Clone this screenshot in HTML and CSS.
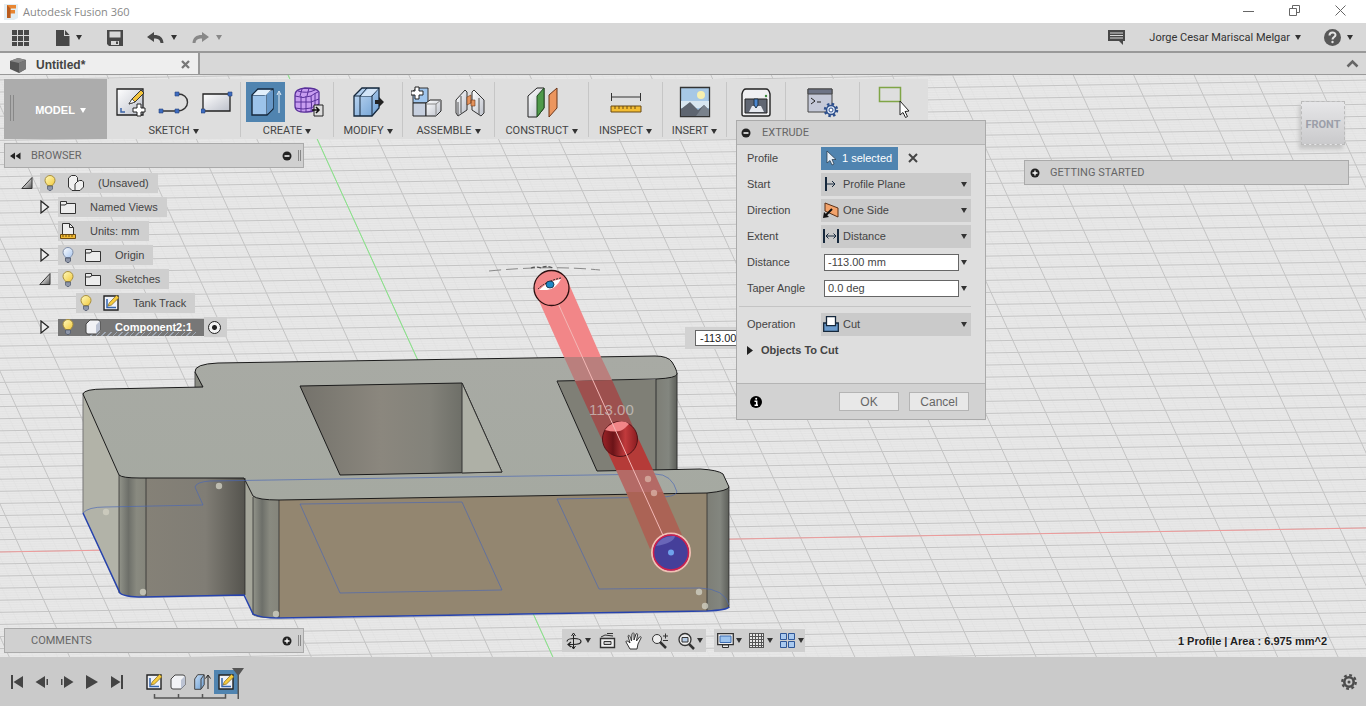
FILE: index.html
```
<!DOCTYPE html>
<html lang="en">
  <head>
    <meta charset="UTF-8" />
    <meta name="viewport" content="width=device-width, initial-scale=1.0" />
    <title>Autodesk Fusion 360</title>
    <link rel="stylesheet" href="styles.css">
  </head>
  <body>
    <!-- shared icons -->
    <svg class="defs" width="0" height="0" aria-hidden="true">
      <defs>
        <linearGradient id="gBulb" x1="0" y1="0" x2="1" y2="1"><stop offset="0" stop-color="#fffbc0"/><stop offset="1" stop-color="#f2c93c"/></linearGradient>
        <linearGradient id="gOff" x1="0" y1="0" x2="1" y2="1"><stop offset="0" stop-color="#fff"/><stop offset="1" stop-color="#a9c6ee"/></linearGradient>
        <linearGradient id="gBlue" x1="0" y1="0" x2="1" y2="1"><stop offset="0" stop-color="#c5dcf5"/><stop offset="1" stop-color="#6d9fd3"/></linearGradient>
        <linearGradient id="gWhite" x1="0" y1="0" x2="1" y2="1"><stop offset="0" stop-color="#fff"/><stop offset="1" stop-color="#bcc0ca"/></linearGradient>
        <linearGradient id="gTri" x1="0" y1="0" x2="1" y2="1"><stop offset="0.3" stop-color="#eee"/><stop offset="1" stop-color="#555"/></linearGradient>
      </defs>
      <symbol id="bulb" viewBox="0 0 16 16"><path d="M5.500 10.500C5 9 3 8 3 5.300a5 4.800 0 0 1 10 0C13 8 11 9 10.500 10.500z" fill="url(#gBulb)" stroke="#a98f3c"/><path d="M5.500 11h5v3l-1.500 1.500h-2L5.500 14z" fill="#8e96a8" stroke="#4c566b" stroke-width=".7"/></symbol>
      <symbol id="bulb-off" viewBox="0 0 16 16"><path d="M5.500 10.500C5 9 3 8 3 5.300a5 4.800 0 0 1 10 0C13 8 11 9 10.500 10.500z" fill="url(#gOff)" stroke="#7f8ea8"/><path d="M5.500 11h5v3l-1.500 1.500h-2L5.500 14z" fill="#8e96a8" stroke="#3c465b" stroke-width=".7"/></symbol>
      <symbol id="folder" viewBox="0 0 16 16"><path d="M.5 14.500v-12h6v2h9v10zM.5 6h4.500l2-1.500" fill="#ececec" stroke="#333"/></symbol>
      <symbol id="sketch" viewBox="0 0 16 16"><path d="M1 1h14v14H1z" fill="#eef1f8" stroke="#222" stroke-width="1.400"/><path d="M4 4v8.500h9" fill="none" stroke="#3566ad" stroke-width="1.500"/><path d="M5 11l1.200-3L13.500.3 16 2.700 8.500 10z" fill="#f7cb3d" stroke="#7a6320" stroke-width=".7"/></symbol>
      <symbol id="body" viewBox="0 0 16 16"><path d="M1 5l4-4h8q2 0 2 2v8l-4 4H3q-2 0-2-2z" fill="#f1f2f5" stroke="#444"/><path d="M11 15V6l4-4v9z" fill="#bcc3d3"/></symbol>
      <symbol id="closed" viewBox="0 0 12 14"><path d="M2 1l7.500 6L2 13z" fill="#eee" stroke="#222" stroke-width="1.200"/></symbol>
      <symbol id="open" viewBox="0 0 12 14"><path d="M11 1.500v11H.8z" fill="url(#gTri)" stroke="#333"/></symbol>
      <symbol id="minus" viewBox="0 0 10 10"><circle cx="5" cy="5" r="4.500" fill="#222"/><path d="M2.500 5h5" stroke="#fff" stroke-width="1.500"/></symbol>
      <symbol id="plus" viewBox="0 0 10 10"><circle cx="5" cy="5" r="4.500" fill="#222"/><path d="M2.500 5h5M5 2.500v5" stroke="#fff" stroke-width="1.300"/></symbol>
    </svg>

    <header class="titlebar">
      <svg width="16" height="16" viewBox="0 0 16 16"><path d="M1 0h14v14l-4 2H1z" fill="#e3eef3"/><path d="M4 1h9v3.500H7.500V6H12v3.500H7.500V14H4z" fill="#e88632"/><path d="M4 1l3.500 3.500V14H4z" fill="#b95c1e"/></svg>
      <h1>Autodesk Fusion 360</h1>
      <div class="window-buttons">
        <button aria-label="Minimize"><svg width="11" height="11"><path d="M0 6.500h11" stroke="#666"/></svg></button>
        <button aria-label="Restore"><svg width="11" height="11" fill="none" stroke="#666"><path d="M.5 3.500h7v7h-7zM3.500 3V.5h7v7H8"/></svg></button>
        <button aria-label="Close"><svg width="11" height="11"><path d="M.5.5l10 10M10.500.5l-10 10" stroke="#666"/></svg></button>
      </div>
    </header>

    <nav class="quickbar">
      <button class="grid-btn" aria-label="Data panel"><svg width="18" height="18" fill="#484848"><path d="M0 1h5v5H0zM6 1h5v5H6zM12 1h5v5h-5zM0 7h5v5H0zM6 7h5v5H6zM12 7h5v5h-5zM0 13h5v4H0zM6 13h5v4H6zM12 13h5v4h-5z"/></svg></button>
      <button class="file-btn" aria-label="File"><svg width="14" height="16" fill="#484848"><path d="M0 0h8v6h5.500v10H0zM9 0l4.500 5H9z"/></svg><i class="caret"></i></button>
      <button class="save-btn" aria-label="Save"><svg width="16" height="16"><path d="M0 0h16v16H2l-2-2z" fill="#484848"/><path d="M2.500 1.500h11v6h-11z" fill="#d8d8d8"/><path d="M4 11h8v4H4z" fill="#d8d8d8"/><path d="M9 11.500h2V14H9z" fill="#484848"/></svg></button>
      <button class="undo-btn" aria-label="Undo"><svg width="18" height="14"><path d="M0 6l7-5v3c6 0 9 2.500 9.500 8h-3C13 8.500 11 7.500 7 7.500V11z" fill="#484848"/></svg><i class="caret"></i></button>
      <button class="redo-btn" aria-label="Redo" disabled><svg width="18" height="14"><path d="M17 6l-7-5v3C4 4 1 6.500.5 12h3C4 8.500 6 7.500 10 7.500V11z" fill="#888"/></svg><i class="caret dim"></i></button>
      <div class="account">
        <button class="chat-btn" aria-label="Notifications"><svg width="17" height="15"><path d="M0 0h17v11h-2v4l-4-4H0z" fill="#484848"/><path d="M2 3h13M2 5.500h13M2 8h13" stroke="#d8d8d8"/></svg></button>
        <button class="user-btn">Jorge Cesar Mariscal Melgar<i class="caret"></i></button>
        <button class="help-btn" aria-label="Help"><svg width="17" height="17"><circle cx="8.500" cy="8.500" r="8.500" fill="#585858"/><path d="M5.500 6.500c0-4 6-4 6-.5 0 2-3 2-3 4.500" stroke="#e4e4e4" stroke-width="2" fill="none"/><circle cx="8.500" cy="13" r="1.200" fill="#e4e4e4"/></svg><i class="caret"></i></button>
      </div>
    </nav>

    <div class="tabs">
      <div class="tab">
        <svg width="17" height="16"><path d="M0 4l8-3 8 2v9l-7 4-9-4z" fill="#555"/><path d="M0 4l8-3 8 2-7 3z" fill="#8a8a8a"/><path d="M9 6l7-3v9l-7 4z" fill="#777"/></svg>
        <span>Untitled*</span>
        <button aria-label="Close tab"><svg width="9" height="9"><path d="M1 1l7 7M8 1L1 8" stroke="#777" stroke-width="2.300"/></svg></button>
      </div>
      <button class="collapse" aria-label="Collapse"><svg width="13" height="9"><path d="M1.500 7.500l5-5 5 5" fill="none" stroke="#666" stroke-width="2.500"/></svg></button>
    </div>

    <main class="viewport">
      <svg class="scene" aria-hidden="true">
        <defs>
          <linearGradient id="gTop" x1="0" y1="0" x2="0" y2="1"><stop offset="0" stop-color="#a8aaa4"/><stop offset="1" stop-color="#a5a9a1"/></linearGradient>
          <linearGradient id="gHole" gradientUnits="userSpaceOnUse" x1="300" x2="462" y1="0" y2="0"><stop offset="0" stop-color="#74726b"/><stop offset=".5" stop-color="#8b877e"/><stop offset=".8" stop-color="#83827a"/><stop offset="1" stop-color="#6e6f68"/></linearGradient>
          <linearGradient id="gWall" x1="0" x2="1"><stop offset="0" stop-color="#858177"/><stop offset=".6" stop-color="#807d75"/><stop offset="1" stop-color="#55544e"/></linearGradient>
          <linearGradient id="gCyl" x1="0" x2="1"><stop offset="0" stop-color="#92948a"/><stop offset=".35" stop-color="#6d6f69"/><stop offset=".65" stop-color="#898a80"/><stop offset="1" stop-color="#85857b"/></linearGradient>
          <linearGradient id="gCylR" x1="0" x2="1"><stop offset="0" stop-color="#7d7e76"/><stop offset=".6" stop-color="#83867f"/><stop offset="1" stop-color="#5c5e59"/></linearGradient>
          <linearGradient id="gBall" x1="0" x2="1"><stop offset="0" stop-color="#9b2327"/><stop offset=".3" stop-color="#6b1418"/><stop offset=".65" stop-color="#c13a3c"/><stop offset="1" stop-color="#8a1c20"/></linearGradient>
        </defs>
        <path id="gridMinor" class="grid-minor"/>
        <path id="gridMajor" class="grid-major"/>
        <g transform="translate(0 -75)">
          <path id="axisX" stroke="#ee9a9a" fill="none"/>
          <path id="axisY" stroke="#86e886" fill="none"/>

          <!-- side walls -->
          <path d="M195 372l8 15-8 1z" fill="#888a81" stroke="#555"/>
          <path d="M83 393l36 82v118l-36-80z" fill="#b2b3a8"/>
          <path d="M83 393v120" stroke="#777" fill="none"/>
          <path d="M119 475h27v122q-22 0-27-4z" fill="url(#gCyl)"/>
          <path d="M146 478h99v117l-99 2z" fill="url(#gWall)"/>
          <path d="M245 478l8 18v119l-8-20z" fill="#a5a69a"/>
          <path d="M253 496l26 4v118q-22 1-26-3z" fill="url(#gCyl)"/>
          <path d="M279 499l428-7v119l-428 7z" fill="#938670"/>
          <path d="M707 492l22-6v121q-3 3-22 4z" fill="url(#gCylR)"/>
          <path d="M557 380h99v92h-60z" fill="#7f7f76"/>
          <path d="M656 379l21-6v98h-21z" fill="url(#gCylR)"/>
          <path d="M656 379v92M677 373v98" stroke="#333" fill="none"/>

          <!-- top face -->
          <path d="M195 372Q194 364 218 363L655 356Q668 356 672 362Q677 370 677 374Q677 378 656 379L557 381L597 471L700 469Q718 470 723 474L729 487Q728 491 707 493L279 500Q258 500 253 496L244 478L140 478Q122 478 119 475L83 394Q84 389 105 389L203 387z" fill="url(#gTop)" stroke="#1b1b1b"/>
          <path d="M300 386l162-3 40 89-162 3z" fill="url(#gHole)" stroke="#1b1b1b"/>
          <path d="M462 383l40 89-40 1z" fill="#aeb0a6" stroke="#333"/>
          <path d="M146 478v118M245 478v117M279 500v118M707 493v118M119 475v118M253 497v118M729 487v121" stroke="#222" fill="none" opacity=".7"/>

          <!-- sketch lines -->
          <path d="M83 513Q88 507 105 507L203 505L195 487Q196 482 210 481L655 474Q672 474 677 492Q675 497 660 497L557 499L599 589L700 588Q725 589 729 605M300 504l162-2 40 88-162 3z" fill="none" stroke="#4a67b5" opacity=".65"/>
          <path d="M83 513L120 593Q124 597 143 597L244 595L253 614Q260 618 278 618L707 611Q727 610 729 607" fill="none" stroke="#2743ad" stroke-width="1.500"/>
          <g fill="#d0cfc2" opacity=".8"><circle cx="106" cy="512" r="3.200"/><circle cx="219" cy="486" r="3.200"/><circle cx="143" cy="592" r="3.200"/><circle cx="276" cy="614" r="3.200"/><circle cx="699" cy="592" r="3.200"/><circle cx="705" cy="606" r="3.200"/></g>

          <!-- cut preview -->
          <path d="M535 292l34-8 32 73h-37z" fill="#f28688"/>
          <path d="M564 357h37l11 23-37 1z" fill="#ba7f7d"/>
          <path d="M575 381l37-1 27 60h-37z" fill="#9d504e"/>
          <path d="M602 440h37l14 30h-37z" fill="#b53b38"/>
          <path d="M616 470h37l10 22h-37z" fill="#b46a66"/>
          <path d="M626 492h37l19 43-32 14z" fill="#ab6355"/>
          <g fill="#d8b0a4" opacity=".8"><circle cx="648" cy="479" r="3.200"/><circle cx="654" cy="493" r="3.200"/></g>
          <circle cx="620" cy="439" r="17.500" fill="url(#gBall)" stroke="#521317"/>
          <path d="M605 430q4-6 12-8t12 2l-4 4q-6 6-20 2z" fill="#f28688"/>
          <path d="M552 290l119 263" stroke="#f2b8b6" fill="none"/>
          <circle cx="551.500" cy="288" r="17.500" fill="#f28688" stroke="#2c1010" stroke-width="1.300"/>
          <path d="M539 290q9-9 22-11-5 10-14 11z" fill="#fff"/>
          <path d="M538 289q8-8 23-11" stroke="#222" stroke-dasharray="2 1" fill="none"/>
          <ellipse cx="550" cy="284.500" rx="4" ry="3.500" fill="#1d87c4" stroke="#123" stroke-width=".8"/>
          <circle cx="671" cy="552.500" r="19" fill="#453f9a" stroke="#f0c0b4" stroke-width="2"/>
          <circle cx="671" cy="552.500" r="17.500" fill="none" stroke="#cf1f4c" stroke-width="1.500"/>
          <path d="M656 546q5-11 19-10-1 7-19 10z" fill="#6966b8"/>
          <circle cx="671" cy="552.500" r="3" fill="#6fa2ec"/>
          <path d="M489 271q60-6 111-1" stroke="#888" stroke-dasharray="12 5" fill="none"/>
          <path d="M531 268q5-2 10 0q5-3 12 0" stroke="#555" stroke-dasharray="4 2" fill="none" stroke-width="1.300"/>
          <text x="589" y="415" class="dim-text">113.00</text>
        </g>
      </svg>

      <div class="ribbon">
        <button class="workspace">MODEL<i class="caret"></i></button>
        <section class="group sketch-group">
          <div class="tools">
            <button aria-label="Create Sketch"><svg width="32" height="32"><path d="M2 3h26v26H2z" fill="url(#gWhite)" stroke="#222" stroke-width="1.300"/><path d="M6 22v4h4" stroke="#3b64a8" stroke-width="1.500" fill="none"/><path d="M14 18l3-5L26 4l3 3-9 9z" fill="#f2c43d" stroke="#333"/><path d="M14 18l3-5 3 3z" fill="#fff" stroke="#333" stroke-width=".7"/><path d="M22 18h4v4h4v4h-4v4h-4v-4h-4v-4h4z" fill="#fff" stroke="#222"/></svg></button>
            <button aria-label="Line"><svg width="32" height="32"><path d="M3 25h16c14 0 14-18 0-17" fill="none" stroke="#333" stroke-width="1.400"/><g fill="#3d6cc0" stroke="#28437a" stroke-width=".6"><path d="M1 23h4v4H1zM17 23h4v4h-4zM17 6h4v4h-4z"/></g></svg></button>
            <button aria-label="Rectangle"><svg width="32" height="32"><path d="M2 8h27v17H2z" fill="url(#gWhite)" stroke="#222" stroke-width="1.300"/><path d="M27 6h4v4h-4zM0 23h4v4H0z" fill="#3d6cc0" stroke="#28437a" stroke-width=".6"/></svg></button>
          </div>
          <button class="label">SKETCH<i class="caret"></i></button>
        </section>
        <section class="group create-group">
          <div class="tools">
            <button class="active" aria-label="Extrude"><svg width="32" height="32"><path d="M2 9l6-6h15v20l-6 6H2z" fill="#9cc3ea" stroke="#16283c" stroke-width="1.400"/><path d="M2 9h12q3 0 3-2l6-4M17 9v20" fill="none" stroke="#16283c"/><path d="M3 9l5-5h13l-5 5z" fill="#e2effb"/><path d="M17 8l6-4v18l-6 6z" fill="#6797c7"/><path d="M29 27V7m-2 2l2-4 2 4" stroke="#e8f1fa" fill="none"/></svg></button>
            <button aria-label="Create Form"><svg width="32" height="32"><path d="M2 9q0-6 10-7 12 0 14 4v12q-2 8-12 8Q2 27 2 20z" fill="#c79df0" stroke="#59309a" stroke-width="1.300"/><path d="M2 10q8 3 16 0M2 16h16M2 22q8 2 16 0M8 10v16M13 10v16M18 10q1 10 0 16M18 10q4-3 7-4M18 16l8-3M18 22l8-4M22 7v16M5 5q9 3 17-1M9 3L7 10M16 2l-2 8" fill="none" stroke="#59309a"/><path d="M21 19h9v11h-9z" fill="#ddd" stroke="#222"/><path d="M19 24h7m-3-3l3 3-3 3" stroke="#111" stroke-width="1.500" fill="none"/></svg></button>
          </div>
          <button class="label">CREATE<i class="caret"></i></button>
        </section>
        <section class="group modify-group">
          <div class="tools">
            <button aria-label="Press Pull"><svg width="32" height="32"><path d="M2 10l8-8h17v20l-7 8H2z" fill="url(#gBlue)" stroke="#16283c" stroke-width="1.300"/><path d="M2 10h6v20M8 10l7-8M8 10h12v20M20 10l7-8" fill="none" stroke="#16283c"/><path d="M9 10l7-7h10l-7 7z" fill="#d2e4f7"/><path d="M23 14h4v-3l5 5-5 5v-3h-4z" fill="#222"/></svg></button>
          </div>
          <button class="label">MODIFY<i class="caret"></i></button>
        </section>
        <section class="group assemble-group">
          <div class="tools">
            <button aria-label="New Component"><svg width="32" height="32"><path d="M2 17V5l4-3h11v15z" fill="#9fc5ed" stroke="#333"/><path d="M2 17h13v13H2z" fill="#c7d0df" stroke="#222"/><path d="M15 17l4-3h11v11l-5 5H15z" fill="url(#gWhite)" stroke="#222"/><path d="M15 18h10v12M25 18l5-4" fill="none" stroke="#888"/><path d="M4 1h4v4h4v4H8v4H4V9H0V5h4z" fill="#fff" stroke="#222"/></svg></button>
            <button aria-label="Joint"><svg width="32" height="32"><path d="M2 14L11 4l2 2v18L4 30l-2-3z" fill="url(#gWhite)" stroke="#333"/><path d="M7 10v17M4 16v14" stroke="#555" fill="none"/><path d="M30 14L20 4l-2 2v18l9 6 3-3z" fill="url(#gWhite)" stroke="#333"/><path d="M25 12v17" stroke="#555" fill="none"/><path d="M13 11l4-2v8l-4 2zM17 14h4v6h-4z" fill="#e4925b" stroke="#66371b" stroke-width=".6"/></svg></button>
          </div>
          <button class="label">ASSEMBLE<i class="caret"></i></button>
        </section>
        <section class="group construct-group">
          <div class="tools">
            <button aria-label="Offset Plane"><svg width="34" height="32"><path d="M3 10l9-8h7v20l-7 9H3z" fill="url(#gWhite)" stroke="#222"/><path d="M12 10l7-8v20l-7 9z" fill="#4f9a4a" stroke="#234c22"/><path d="M24 9l8-7v20l-8 9z" fill="#ec965e" stroke="#6b3417"/></svg></button>
          </div>
          <button class="label">CONSTRUCT<i class="caret"></i></button>
        </section>
        <section class="group inspect-group">
          <div class="tools">
            <button aria-label="Measure"><svg width="32" height="32"><path d="M2 11h28M1.500 7v8M30.500 7v8" stroke="#333" fill="none"/><path d="M1 20h30v6H1z" fill="#f3bd33" stroke="#6b4a12"/><path d="M5 20v3M9 20v3M13 20v3M17 20v3M21 20v3M25 20v3" stroke="#6b4a12"/></svg></button>
          </div>
          <button class="label">INSPECT<i class="caret"></i></button>
        </section>
        <section class="group insert-group">
          <div class="tools">
            <button aria-label="Insert image"><svg width="32" height="32"><path d="M1.500 1.500h29v29h-29z" fill="#a7c8e6" stroke="#333" stroke-width="1.300"/><path d="M2 15h28v7H2z" fill="#d8e6f0"/><circle cx="22" cy="9" r="4" fill="#f7f0b0"/><path d="M2 23l9-7 8 8 6-5 5 5v6H2z" fill="#5e6570"/><path d="M17 30l8-11 5 5v6z" fill="#7a828c"/></svg></button>
          </div>
          <button class="label">INSERT<i class="caret"></i></button>
        </section>
        <section class="group make-group">
          <div class="tools">
            <button aria-label="3D Print"><svg width="32" height="32"><path d="M2 8q1-5 4-5h20q3 0 4 5v20q0 2-2 2H4q-2 0-2-2z" fill="#f0f0f2" stroke="#222" stroke-width="1.400"/><path d="M5 13h22v14H5z" fill="#606672" stroke="#222"/><path d="M9 26l3-6h9l3 6z" fill="#e6e9ef"/><path d="M14 13h4v6l-2 3-2-3z" fill="#4b87d0" stroke="#234"/><circle cx="26" cy="10" r="1.200" fill="#3a8b3a"/></svg></button>
          </div>
        </section>
        <section class="group addins-group">
          <div class="tools">
            <button aria-label="Scripts and Add-Ins"><svg width="34" height="32"><path d="M2 3h24v23H2z" fill="#c5c9d8" stroke="#444"/><path d="M2 3h24v5H2z" fill="#6e7486" stroke="#444"/><path d="M5 12l4 3-4 3M11 16h4" fill="none" stroke="#222"/><circle cx="25" cy="24" r="4.500" fill="#dce6f5" stroke="#2d4f8c" stroke-width="1.500"/><circle cx="25" cy="24" r="6" fill="none" stroke="#2d4f8c" stroke-width="2.500" stroke-dasharray="2.400 2.310"/><circle cx="25" cy="24" r="2" fill="#fff" stroke="#2d4f8c"/></svg></button>
          </div>
        </section>
        <section class="group select-group">
          <div class="tools">
            <button aria-label="Select"><svg width="34" height="32"><path d="M2.500 1.500h21v14h-21z" fill="none" stroke="#7fa546" stroke-width="1.500"/><path d="M23 15v14l3-2.500 2.500 5 2-1-2.500-5 4-.5z" fill="#fff" stroke="#222"/></svg></button>
          </div>
        </section>
      </div>

      <aside class="browser">
        <div class="panel-bar">
          <svg width="11" height="8" fill="#222"><path d="M0 4l5-3.500v7zM5.500 4l5-3.500v7z"/></svg>
          <h2>BROWSER</h2>
          <button aria-label="Collapse browser"><svg width="10" height="10"><use href="#minus"/></svg></button>
          <i class="grip"></i>
        </div>
        <ul class="tree">
          <li class="level-0"><svg width="12" height="14"><use href="#open"/></svg><span class="node"><svg width="16" height="16"><use href="#bulb"/></svg><svg class="type" width="17" height="16"><path d="M1.500 12V3l3-2.500h4l2 2v4l2-1h2.500l1.500 1.500v5L13 15.500H5z" fill="#f0f0f0" stroke="#333"/><path d="M8 15V9l3-3" fill="none" stroke="#333"/></svg>(Unsaved)</span></li>
          <li class="level-1"><svg width="12" height="14"><use href="#closed"/></svg><span class="node"><svg width="16" height="16"><use href="#folder"/></svg>Named Views</span></li>
          <li class="level-1"><svg width="12" height="14"></svg><span class="node"><svg width="16" height="16"><path d="M2.500 13V.5h7l4 4V13" fill="#eee" stroke="#333"/><path d="M9.500.5v4h4" fill="none" stroke="#333"/><path d="M.5 11.500h15v4H.5z" fill="#f2bb33" stroke="#6b4a12"/><path d="M3 12v2M6 12v2M9 12v2M12 12v2" stroke="#6b4a12"/></svg>Units: mm</span></li>
          <li class="level-1"><svg width="12" height="14"><use href="#closed"/></svg><span class="node"><svg width="16" height="16"><use href="#bulb-off"/></svg><svg class="type" width="16" height="16"><use href="#folder"/></svg>Origin</span></li>
          <li class="level-1"><svg width="12" height="14"><use href="#open"/></svg><span class="node"><svg width="16" height="16"><use href="#bulb"/></svg><svg class="type" width="16" height="16"><use href="#folder"/></svg>Sketches</span></li>
          <li class="level-2"><svg width="12" height="14"></svg><span class="node"><svg width="16" height="16"><use href="#bulb"/></svg><svg class="type" width="16" height="16"><use href="#sketch"/></svg>Tank Track</span></li>
          <li class="level-1"><svg width="12" height="14"><use href="#closed"/></svg><span class="node selected"><svg width="16" height="16"><use href="#bulb"/></svg><svg class="type" width="16" height="16"><use href="#body"/></svg>Component2:1</span><label class="activate"><input type="radio" name="active" checked aria-label="Activate component" /></label></li>
        </ul>
      </aside>

      <div class="viewcube">FRONT</div>

      <div class="panel-bar getting-started">
        <button aria-label="Expand"><svg width="10" height="10"><use href="#plus"/></svg></button>
        <h2>GETTING STARTED</h2>
      </div>

      <div class="float-input"><input type="text" value="-113.00" aria-label="Distance value" /></div>

      <form class="dialog">
        <div class="dialog-head">
          <svg width="10" height="10"><use href="#minus"/></svg>
          <h2>EXTRUDE</h2>
        </div>
        <div class="dialog-body">
          <div class="field">
            <label for="profile">Profile</label>
            <button type="button" id="profile" class="pick"><svg width="12" height="16"><path d="M2 1v12l3-2.500 2 4.500 2-1-2-4.500h4z" fill="#e5eef7" stroke="#234" stroke-width=".7"/></svg>1 selected</button>
            <button type="button" class="clear" aria-label="Clear"><svg width="10" height="10"><path d="M1 1l8 8M9 1L1 9" stroke="#444" stroke-width="2"/></svg></button>
          </div>
          <div class="field">
            <label for="start">Start</label>
            <div class="drop"><svg width="16" height="16"><path d="M3 1v14" stroke="#16283c" stroke-width="2"/><path d="M4 8h8m-3-3l3 3-3 3" fill="none" stroke="#16283c"/></svg><select id="start"><option>Profile Plane</option></select><i class="caret"></i></div>
          </div>
          <div class="field">
            <label for="direction">Direction</label>
            <div class="drop"><svg width="16" height="16"><path d="M2 1l13 5v9L2 9z" fill="#f3a36b" stroke="#5c3016"/><path d="M9 7l-7 7" stroke="#111" stroke-width="2"/><path d="M0 16l1-6 5 5z" fill="#111"/></svg><select id="direction"><option>One Side</option></select><i class="caret"></i></div>
          </div>
          <div class="field">
            <label for="extent">Extent</label>
            <div class="drop"><svg width="16" height="16"><path d="M1 1v14M15 1v14" stroke="#16283c" stroke-width="2"/><path d="M3 8h10M5.500 5.500L3 8l2.500 2.500M10.500 5.500L13 8l-2.500 2.500" fill="none" stroke="#16283c"/></svg><select id="extent"><option>Distance</option></select><i class="caret"></i></div>
          </div>
          <div class="field">
            <label for="distance">Distance</label>
            <input type="text" id="distance" value="-113.00 mm" /><i class="caret"></i>
          </div>
          <div class="field">
            <label for="taper">Taper Angle</label>
            <input type="text" id="taper" value="0.0 deg" /><i class="caret"></i>
          </div>
          <hr />
          <div class="field">
            <label for="operation">Operation</label>
            <div class="drop"><svg width="16" height="16"><path d="M.7 7h14.600v8.300H.7z" fill="#6b9bcd" stroke="#16283c" stroke-width="1.300"/><path d="M3.500.7h9v9h-9z" fill="#fff" stroke="#16283c" stroke-width="1.300"/></svg><select id="operation"><option>Cut</option></select><i class="caret"></i></div>
          </div>
          <button type="button" class="objects"><svg width="6" height="9"><path d="M0 0l6 4.500L0 9z" fill="#222"/></svg>Objects To Cut</button>
        </div>
        <div class="dialog-foot">
          <svg width="12" height="12"><circle cx="6" cy="6" r="6" fill="#000"/><path d="M4.500 5.200H6.700V9M4.500 9.200h3.500" stroke="#fff" stroke-width="1.500" fill="none"/><circle cx="6.200" cy="2.700" r="1" fill="#fff"/></svg>
          <button type="button">OK</button>
          <button type="button">Cancel</button>
        </div>
      </form>

      <div class="panel-bar comments">
        <h2>COMMENTS</h2>
        <button aria-label="Expand comments"><svg width="10" height="10"><use href="#plus"/></svg></button>
        <i class="grip"></i>
      </div>

      <div class="navbar">
        <div class="nav-set">
          <button aria-label="Orbit"><svg width="18" height="18" fill="none" stroke="#222"><path d="M8.500 17V3M6.500 4l2-3 2 3M6.500 14l2 3 2-3" /><path d="M2 9.500c0-4 14-4 14 0 0 2-4 3-8 3H3m3-2.500l-3 2.500 3 2.500" stroke-width="1.200"/></svg><i class="caret"></i></button>
          <button aria-label="Look at"><svg width="18" height="18" fill="none" stroke="#333"><path d="M1.500 6.500h14v9h-14z" fill="#eee" stroke-width="1.400"/><path d="M5 9.500h7v3H5z" fill="#ccc"/><path d="M2 5l4-2 8 1M8 1.500h6"/></svg></button>
          <button aria-label="Pan"><svg width="18" height="18"><path d="M5 17l-4-7c0-2 2-1 4 1L3 4c1-2 2 0 3.500 5L7 2c1-2 2-1 2 0v6l2-6c1-1 2 0 1.500 1L11.500 9l3-4c1-1 2 0 1.500 1L13 12l-1 5z" fill="#fff" stroke="#333"/></svg></button>
          <button aria-label="Zoom"><svg width="18" height="18"><circle cx="6" cy="7" r="4.500" fill="#eee" stroke="#333"/><path d="M9 10l6 6" stroke="#333" stroke-width="2.500"/><path d="M12 4h5M14.500 1.500v5M12 8.500h5" stroke="#333"/></svg></button>
          <button aria-label="Fit"><svg width="18" height="18"><circle cx="8" cy="7.500" r="6" fill="#eee" stroke="#333" stroke-width="1.300"/><path d="M5 5.500h6v4.500H5z" fill="#b7cce5" stroke="#333"/><path d="M12 12l5 5" stroke="#333" stroke-width="2.500"/></svg><i class="caret"></i></button>
        </div>
        <div class="nav-set">
          <button aria-label="Display settings"><svg width="17" height="17"><path d="M.7 1.700h15.600v11H.7z" fill="#eee" stroke="#333" stroke-width="1.300"/><path d="M3 4h11v6.500H3z" fill="#9cc3ee" stroke="#3d6cb0"/><path d="M5.500 13h6v2.500h-6z" fill="#eee" stroke="#333"/></svg><i class="caret"></i></button>
          <button aria-label="Grid"><svg width="17" height="17"><path d="M1 1h15v15H1z" fill="#e8e8e8"/><path d="M1.500 1v15M4.500 1v15M7.500 1v15M10.500 1v15M13.500 1v15M15.500 1v15M1 1.500h15M1 4.500h15M1 7.500h15M1 10.500h15M1 13.500h15M1 15.500h15" stroke="#555"/></svg><i class="caret"></i></button>
          <button aria-label="Viewports"><svg width="17" height="17" fill="#a9c9ef" stroke="#2f5797"><path d="M1.500 1.500h6v6h-6zM9.500 1.500h6v6h-6zM1.500 9.500h6v6h-6zM9.500 9.500h6v6h-6z"/></svg><i class="caret"></i></button>
        </div>
      </div>

      <p class="status">1 Profile | Area : 6.975 mm^2</p>
    </main>

    <footer class="timeline">
      <div class="playback">
        <button aria-label="First"><svg width="14" height="14"><path d="M1 0h2v14H1zM13 1v12L3.500 7z" fill="#444"/></svg></button>
        <button aria-label="Step back"><svg width="14" height="14"><path d="M10 1v12L.5 7zM11.500 4H13v6h-1.500z" fill="#444"/></svg></button>
        <button aria-label="Step forward"><svg width="14" height="14"><path d="M4 1v12l9.500-6zM1 4h1.500v6H1z" fill="#444"/></svg></button>
        <button aria-label="Play"><svg width="14" height="14"><path d="M1 0v14l12-7z" fill="#444"/></svg></button>
        <button aria-label="Last"><svg width="14" height="14"><path d="M1 1v12l9.500-6zM11 0h2v14h-2z" fill="#444"/></svg></button>
      </div>
      <div class="features">
        <button aria-label="Sketch 1"><svg width="16" height="16"><use href="#sketch"/></svg></button>
        <button aria-label="Component"><svg width="16" height="16"><use href="#body"/></svg></button>
        <button aria-label="Extrude 1"><svg width="17" height="16"><path d="M.7 5l3-4.300h6.500v10L7 15.300H.7z" fill="url(#gBlue)" stroke="#444"/><path d="M7 15V5l3-4" fill="none" stroke="#444"/><path d="M14 15V2m-2.500 2.500L14 1l2.500 3.500" stroke="#222" fill="none"/></svg></button>
        <button class="active" aria-label="Sketch 2"><svg width="16" height="16"><use href="#sketch"/></svg></button>
        <svg class="track" width="104" height="36"><path d="M12.500 26v4h71v-4M36.500 26v4M60.500 26v4" fill="none" stroke="#555" stroke-width="1.500"/><path d="M90 0h12l-5 7v24h-1.500V7z" fill="#555"/></svg>
      </div>
      <button class="settings" aria-label="Timeline settings"><svg width="16" height="16"><circle cx="8" cy="8" r="4.700" fill="none" stroke="#4c4c4c" stroke-width="2.600"/><circle cx="8" cy="8" r="6.800" fill="none" stroke="#4c4c4c" stroke-width="2.200" stroke-dasharray="2.800 2.540"/><circle cx="8" cy="8" r="1.500" fill="#4c4c4c"/></svg></button>
    </footer>

    <script>
      // ground plane grid, origin where the red and green axes cross
      const origin = { x: 501, y: 468 };
      const slopeX = -0.0176;
      const slopeY = 0.455;

      function gridPath(stepX, stepY, skip) {
        const w = window.innerWidth;
        const h = window.innerHeight;
        let d = "";
        for (let i = -200; i < 400; i++) {
          if (skip && i % 5 === 0) continue;
          const top = origin.x + i * stepX - slopeY * origin.y;
          if (top > -h && top < w) d += `M${top} 0L${top + slopeY * h} ${h}`;
          const left = origin.y + i * stepY - slopeX * origin.x;
          if (left > 0 && left < h + 40) d += `M0 ${left}L${w} ${left + slopeX * w}`;
        }
        return d;
      }

      function drawGrid() {
        const w = window.innerWidth;
        const top = origin.x - slopeY * origin.y;
        document.getElementById("gridMajor").setAttribute("d", gridPath(60.4, 12.1, false));
        document.getElementById("gridMinor").setAttribute("d", gridPath(12.08, 2.42, true));
        document.getElementById("axisX").setAttribute("d", `M0 552L${w} ${552 + slopeX * w}`);
        document.getElementById("axisY").setAttribute("d", `M${top} 75L${top + slopeY * 700} 775`);
      }

      drawGrid();
      window.addEventListener("resize", drawGrid);
    </script>
  </body>
</html>
```
FILE: styles.css
```
* {
  box-sizing: border-box;
}
body {
  display: flex;
  flex-direction: column;
  height: 100vh;
  margin: 0;
  overflow: hidden;
  font-family: "Liberation Sans", Arial, sans-serif;
  font-size: 11px;
  color: #444;
  background: #cacaca;
}
svg {
  display: block;
  flex: none;
}
.defs {
  position: absolute;
}
button {
  display: flex;
  align-items: center;
  padding: 0;
  border: none;
  background: none;
  font: inherit;
  color: inherit;
  cursor: pointer;
}
h1,
h2,
p {
  margin: 0;
  font-size: 11px;
  font-weight: normal;
}
.caret {
  flex: none;
  border: 3px solid transparent;
  border-top: 5px solid #333;
  border-bottom: 0;
}
.caret.dim {
  border-top-color: #888;
}

/* title bar */
.titlebar {
  display: flex;
  align-items: center;
  flex: none;
  height: 23px;
  padding-left: 3px;
  gap: 4px;
  background: #fff;
}
.titlebar h1 {
  font-family: "Open Sans", sans-serif;
  font-size: 11px;
  color: #888;
}
.window-buttons {
  display: flex;
  gap: 35px;
  margin: 0 20px 3px auto;
}

/* quick access bar */
.quickbar {
  display: flex;
  align-items: center;
  flex: none;
  height: 30px;
  padding: 1px 13px 0 12px;
  background: #d8d8d8;
  border-bottom: 2px solid #999;
}
.quickbar button {
  gap: 6px;
}
.file-btn {
  margin-left: 26px;
}
.save-btn {
  margin-left: 25px;
}
.undo-btn {
  margin-left: 24px;
}
.redo-btn {
  margin-left: 15px;
}
.account {
  display: flex;
  align-items: center;
  margin-left: auto;
}
.quickbar .user-btn {
  gap: 5px;
  margin: 0 23px 0 24px;
  font-family: Roboto, sans-serif;
  color: #333;
}

/* document tabs */
.tabs {
  display: flex;
  align-items: center;
  flex: none;
  height: 22px;
  background: #d8d8d8;
  border-bottom: 1px solid #999;
}
.tab {
  display: flex;
  align-items: center;
  gap: 9px;
  width: 200px;
  height: 21px;
  padding: 2px 8px 0 10px;
  background: #eee;
  border-right: 2px solid #999;
  font-size: 12px;
  font-weight: bold;
}
.tab button {
  margin-left: auto;
}
.collapse {
  margin: 0 7px 0 auto;
}

/* canvas */
.viewport {
  position: relative;
  flex: 1;
  padding: 4px;
  background: #e8e8e8;
  overflow: hidden;
}
.scene {
  position: absolute;
  inset: 0;
  width: 100%;
  height: 100%;
}
.grid-major {
  fill: none;
  stroke: #c4c4c4;
}
.grid-minor {
  fill: none;
  stroke: #dedede;
  stroke-width: 0.5px;
}
.dim-text {
  font-size: 15px;
  fill: #d2cbc6;
  opacity: 0.7;
}

/* ribbon */
.ribbon {
  position: relative;
  display: flex;
  width: 924px;
  height: 60px;
  background: #dedede;
}
.workspace {
  justify-content: center;
  gap: 5px;
  width: 103px;
  background: linear-gradient(90deg, transparent 6px, #888 6px, #888 7px, transparent 7px, transparent 9px, #888 9px, #888 10px, transparent 10px) 0 16px / 100% 26px no-repeat #acacac;
  padding: 2px 0 0 10px;
  font-weight: bold;
  color: #fff;
}
.workspace .caret {
  border-top-color: #fff;
}
.group {
  display: flex;
  flex-direction: column;
  align-items: center;
  justify-content: space-between;
  height: 55px;
  margin-top: 3px;
  border-right: 1px solid #c6c6c6;
}
.tools {
  display: flex;
  gap: 4px;
}
.tools button {
  justify-content: center;
  width: 39px;
  height: 40px;
}
.tools .active {
  background: #5084b0;
}
.label {
  gap: 3px;
  font-family: Roboto, sans-serif;
  line-height: 12px;
}
.sketch-group {
  width: 134px;
}
.create-group {
  width: 93px;
}
.modify-group {
  width: 69px;
}
.assemble-group {
  width: 92px;
}
.construct-group {
  width: 94px;
}
.inspect-group {
  width: 74px;
}
.insert-group {
  width: 64px;
}
.make-group {
  width: 59px;
}
.addins-group {
  width: 74px;
}
.select-group {
  width: 68px;
  border-right: none;
}

/* docked panels */
.panel-bar {
  display: flex;
  align-items: center;
  height: 25px;
  padding: 0 2px 0 5px;
  background: #d0d0d0;
  border: 1px solid #aaa;
}
.panel-bar h2 {
  flex: 1;
  margin-left: 10px;
  font-family: Roboto, sans-serif;
  color: #666;
}
.grip {
  width: 3px;
  height: 11px;
  margin-left: 6px;
  border: solid #888;
  border-width: 0 1px;
}
.browser {
  position: relative;
  width: 300px;
  margin-top: 4px;
}
.tree {
  display: flex;
  flex-direction: column;
  gap: 4px;
  margin: 5px 0 0;
  padding: 0;
  list-style: none;
}
.tree li {
  display: flex;
  align-items: center;
  height: 20px;
}
.level-0 {
  padding-left: 17px;
}
.level-1 {
  padding-left: 35px;
}
.level-2 {
  padding-left: 53px;
}
.node {
  display: flex;
  align-items: center;
  height: 20px;
  margin-left: 7px;
  padding: 0 9px 0 2px;
  background: #cfcfcf;
}
.node svg:last-of-type {
  margin-right: 14px;
}
.node .type {
  margin-left: 9px;
}
.selected {
  height: 17px;
  padding-right: 12px;
  background: repeating-linear-gradient(135deg, #9fa8b4 0 1px, #777 1px 4px) 30px 100% / 110px 4px no-repeat #777;
  font-weight: bold;
  color: #fff;
}
.activate {
  display: flex;
  align-items: center;
  height: 20px;
  padding: 0 6px 0 4px;
  background: #cfcfcf;
}
.activate input {
  appearance: none;
  width: 13px;
  height: 13px;
  margin: 0;
  border: 1px solid #222;
  border-radius: 50%;
  background: radial-gradient(circle, #222 2px, #f4f4f4 3px);
}
.getting-started {
  position: absolute;
  top: 85px;
  right: 17px;
  width: 325px;
}
.comments {
  position: absolute;
  left: 4px;
  bottom: 4px;
  width: 300px;
  padding-left: 16px;
}
.viewcube {
  position: absolute;
  top: 26px;
  right: 21px;
  width: 44px;
  height: 44px;
  border: 1px dashed #bbb;
  background: linear-gradient(#e6e6e8, #cacacc);
  box-shadow: -2px 4px 4px #c4c4c4;
  font-family: Roboto, sans-serif;
  font-weight: bold;
  line-height: 46px;
  text-align: center;
  color: #9c9fa9;
}

/* extrude dialog */
.float-input {
  position: absolute;
  top: 252px;
  left: 685px;
  padding: 3px 0 3px 10px;
  background: #d2d2d2;
}
.float-input input {
  display: block;
  width: 60px;
  height: 16px;
  padding: 0 4px;
  border: 1px solid #666;
  font: inherit;
  color: #222;
}
.dialog {
  position: absolute;
  top: 45px;
  left: 736px;
  width: 250px;
  background: #dedede;
  border: 1px solid #aaa;
}
.dialog-head {
  display: flex;
  align-items: center;
  gap: 11px;
  height: 24px;
  padding-left: 4px;
  background: #d0d0d0;
  border-bottom: 1px solid #b4b4b4;
}
.dialog-head h2 {
  font-family: Roboto, sans-serif;
  color: #666;
}
.dialog-body {
  padding: 0 14px 20px 10px;
}
.field {
  display: flex;
  align-items: center;
  height: 26px;
}
.field label {
  width: 74px;
}
.pick {
  gap: 5px;
  width: 77px;
  height: 23px;
  padding-left: 4px;
  background: #5084b0;
  color: #fff;
}
.clear {
  margin-left: 10px;
}
.drop {
  position: relative;
  display: flex;
  align-items: center;
  width: 150px;
  height: 23px;
  padding: 0 4px 0 2px;
  background: #cacaca;
}
.drop select {
  flex: 1;
  appearance: none;
  height: 23px;
  padding: 0 0 0 4px;
  border: none;
  background: none;
  font: inherit;
  color: inherit;
}
.field input {
  width: 135px;
  height: 17px;
  margin: 0 2px 0 3px;
  padding: 0 3px;
  border: 1px solid #666;
  font: inherit;
  color: inherit;
}
.dialog hr {
  height: 1px;
  margin: 5px 0 4px -8px;
  border: none;
  background: #c4c4c4;
}
.objects {
  gap: 8px;
  height: 26px;
  font-weight: bold;
}
.dialog-foot {
  display: flex;
  align-items: center;
  gap: 10px;
  height: 36px;
  padding: 0 16px 0 13px;
  background: #d2d2d2;
  border-top: 1px solid #b4b4b4;
}
.dialog-foot svg {
  margin-right: auto;
}
.dialog-foot button {
  justify-content: center;
  width: 60px;
  height: 19px;
  border: 1px solid #b4b4b4;
  background: #e8e8e8;
  font-size: 12px;
  color: #666;
}

/* bottom of the canvas */
.navbar {
  position: absolute;
  bottom: 5px;
  left: 0;
  right: 0;
  display: flex;
  justify-content: center;
  gap: 8px;
  pointer-events: none;
}
.nav-set {
  display: flex;
  align-items: center;
  gap: 8px;
  height: 23px;
  padding: 0 3px;
  background: #cfcfcf;
  pointer-events: auto;
}
.nav-set + .nav-set {
  gap: 6px;
  padding-right: 1px;
}
.nav-set button {
  gap: 2px;
}
.status {
  position: absolute;
  right: 39px;
  bottom: 10px;
  font-weight: bold;
  color: #222;
  text-shadow: 0 0 2px #fff;
}

/* timeline */
.timeline {
  display: flex;
  align-items: center;
  flex: none;
  height: 49px;
  padding: 0 9px 0 10px;
  background: #cacaca;
}
.playback {
  display: flex;
  gap: 11px;
}
.features {
  position: relative;
  display: flex;
  margin-left: 18px;
}
.features button {
  justify-content: center;
  width: 24px;
  height: 24px;
}
.features .active {
  background: #5084b0;
}
.track {
  position: absolute;
  top: -2px;
  left: 0;
  pointer-events: none;
}
.settings {
  margin-left: auto;
}
```
